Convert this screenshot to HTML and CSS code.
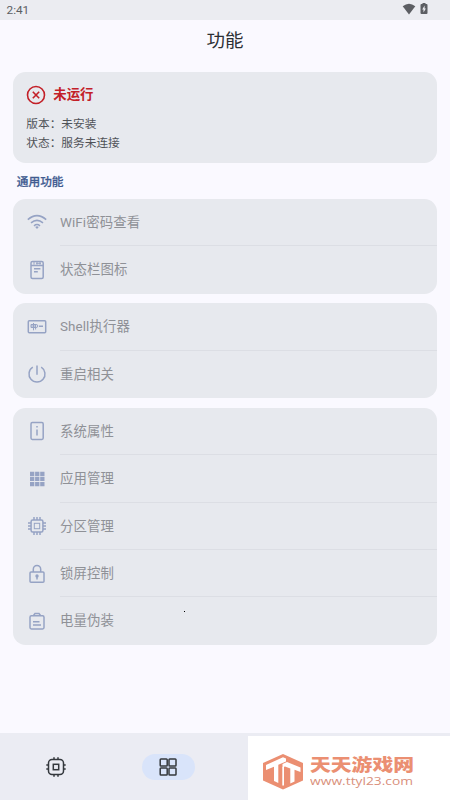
FILE: index.html
```html
<!DOCTYPE html>
<html lang="zh-CN">
<head>
<meta charset="utf-8">
<meta name="viewport" content="width=device-width, initial-scale=1">
<title>功能</title>
<link rel="stylesheet" href="styles.css">
</head>
<body>
<div class="screen">
  <header class="status-bar">
    <span>2:41</span>
    <div class="status-icons">
      <svg width="14" height="12" viewBox="0 0 14 12"><path fill="currentColor" d="M.7 3.3Q7-1.7 13.3 3.3L7 11.5Z"/></svg>
      <svg width="8" height="12" viewBox="0 0 8 12"><path fill="currentColor" d="M2.5 0h3v1h1q1 0 1 1v8q0 1-1 1h-5q-1 0-1-1V2q0-1 1-1h1Z"/><path fill="#ebecf1" d="M4.6 2.5 2.2 6.5h1.3v3l2.4-4.1H4.6Z"/></svg>
    </div>
  </header>
  <h1 class="page-title">功能</h1>
  <main class="content">
    <section class="card summary">
      <div class="summary-head">
        <svg class="icon" viewBox="0 0 20 20"><circle cx="10" cy="10" r="8.5"/><path d="m6.8 6.8 6.4 6.4m0-6.4-6.4 6.4"/></svg>
        <strong>未运行</strong>
      </div>
      <p>版本：未安装</p>
      <p>状态：服务未连接</p>
    </section>
    <h2 class="section-title">通用功能</h2>
    <section class="card">
      <div class="row">
        <svg class="icon" viewBox="0 0 20 20"><path d="M.8 6.6q9.2-8 18.4 0M4 9.9q6-5.1 12 0M7 12.8q3-2.5 6 0"/><path class="solid" d="m8.2 14 1.8 2 1.8-2q-1.8-1.4-3.6 0Z"/></svg>
        <span>WiFi密码查看</span>
      </div>
      <div class="row">
        <svg class="icon" viewBox="0 0 20 20"><rect x="4" y="1.6" width="12.2" height="16.8" rx="1.5"/><path d="M4 5.4h12.2M7 8.8h6.4M7 11.8h3.8"/><path class="thin" d="M7 2v2.7m3-2.7v2.7m3-2.7v2.7M9 3.3h5"/></svg>
        <span>状态栏图标</span>
      </div>
    </section>
    <section class="card">
      <div class="row">
        <svg class="icon" viewBox="0 0 20 20"><rect x="1.3" y="3.8" width="17.4" height="12" rx="1"/><path class="thin" d="M6.5 6v7.3M4 7.5h5.2q1.6 0 1.6 1.5t-1.6 1.5H4ZM4 9h5M8.6 7.5v5"/><path d="M12 9.3h4"/></svg>
        <span>Shell执行器</span>
      </div>
      <div class="row">
        <svg class="icon" viewBox="0 0 20 20"><path d="M10 1.5v9.2M5.8 3.2a8 8 0 1 0 8.4 0"/></svg>
        <span>重启相关</span>
      </div>
    </section>
    <section class="card">
      <div class="row">
        <svg class="icon" viewBox="0 0 20 20"><rect x="4" y="1.6" width="12.2" height="16.8" rx="1.3"/><path d="M10 5v1.5m0 2v6"/></svg>
        <span>系统属性</span>
      </div>
      <div class="row">
        <svg class="icon" viewBox="0 0 20 20"><path class="solid" d="M3 2.7h4.3V7H3Zm5.1 0h4.3V7H8.1Zm5.1 0h4.3V7h-4.3ZM3 7.8h4.3v4.3H3Zm5.1 0h4.3v4.3H8.1Zm5.1 0h4.3v4.3h-4.3ZM3 12.9h4.3v4.3H3Zm5.1 0h4.3v4.3H8.1Zm5.1 0h4.3v4.3h-4.3Z"/></svg>
        <span>应用管理</span>
      </div>
      <div class="row">
        <svg class="icon" viewBox="0 0 20 20"><rect x="4.1" y="4.1" width="11.8" height="11.8" rx="1.5"/><path d="M7 1v3m3-3v3m3-3v3M7 16v3m3-3v3m3-3v3M1 7h3m-3 3h3m-3 3h3M16 7h3m-3 3h3m-3 3h3"/><rect class="thin" x="7.3" y="7.3" width="5.4" height="5.4"/></svg>
        <span>分区管理</span>
      </div>
      <div class="row">
        <svg class="icon" viewBox="0 0 20 20"><rect x="3" y="8" width="14" height="10.2" rx="1"/><path d="M6.3 8V5.2a3.7 3.7 0 0 1 7.4 0V8M10 12v3.5"/><circle class="solid" cx="10" cy="12" r="1.7"/></svg>
        <span>锁屏控制</span>
      </div>
      <div class="row">
        <svg class="icon" viewBox="0 0 20 20"><rect x="3" y="4.8" width="14" height="13.1" rx="1.4"/><path d="M6.3 4.8 8 2.5h4l1.7 2.3M6 10.8h6.5M6 14.1h8"/></svg>
        <span>电量伪装</span>
      </div>
    </section>
  </main>
  <nav class="tab-bar">
    <div class="tab">
      <svg class="icon" viewBox="0 0 20 20"><rect x="2.5" y="2.5" width="15" height="15" rx="3.5"/><rect x="7.3" y="7.3" width="5.4" height="5.4"/><path d="M8 .3v2.2M12 .3v2.2M8 17.5v2.2M12 17.5v2.2M.3 8h2.2M.3 12h2.2M17.5 8h2.2M17.5 12h2.2"/></svg>
    </div>
    <div class="tab active">
      <svg class="icon" viewBox="0 0 20 20"><rect x="2.2" y="2" width="7" height="7" rx=".8"/><rect x="11" y="2" width="7" height="7" rx=".8"/><rect x="2.2" y="11" width="7" height="7" rx=".8"/><rect x="11" y="11" width="7" height="7" rx=".8"/></svg>
    </div>
  </nav>
  <i class="speck"></i>
  <aside class="watermark">
    <svg width="40" height="36" viewBox="0 0 40 36"><path fill="#eb8f72" d="M20 0 40 9v17.5L20 35.5 0 26.5V9Z"/><path fill="#fff" d="M3 11 20 3.2 23 4.6V7.5L15.3 10.8V29L11 27V12.7L3 16ZM19.5 10 24 8 37.5 13.5V18L31.5 15.8V27.5L27.3 29.4V14.4L22 12.5 19.5 13.5Z"/><path fill="#fff" d="M19.3 13h1.7v18.5h-1.7Z"/></svg>
    <div class="brand">
      <div class="brand-name">天天游戏网</div>
      <div class="brand-url">www.ttyl23.com</div>
    </div>
  </aside>
</div>
</body>
</html>
```
FILE: styles.css
```css
* { box-sizing: border-box; }

body {
  margin: 0;
  font-family: Roboto, "Noto Sans CJK SC", sans-serif;
  background: #faf9ff;
}

h1, h2, p { margin: 0; }

svg { display: block; flex: none; }

.screen {
  position: relative;
  display: flex;
  flex-direction: column;
  height: 800px;
  overflow: hidden;
}

.status-bar {
  display: flex;
  align-items: center;
  justify-content: space-between;
  height: 20px;
  padding: 0 22px 0 6.5px;
  background: #ebecf1;
  color: #5c5e63;
  font-size: 11.8px;
}

.status-icons {
  display: flex;
  gap: 4px;
  margin-top: -2px;
}

.page-title {
  height: 51.8px;
  line-height: 43px;
  text-align: center;
  font-size: 18.5px;
  font-weight: 400;
  color: #2d3035;
}

.content {
  flex: 1;
  padding: 0 13.3px;
}

.card {
  margin-bottom: 9.6px;
  border-radius: 12.5px;
  background: #e7e9ee;
  overflow: hidden;
}

.icon {
  width: 20px;
  height: 20px;
  fill: none;
  stroke: currentColor;
  stroke-width: 1.5;
}

.icon .solid { fill: currentColor; stroke: none; }
.icon .thin { stroke-width: 1; }

.summary {
  height: 91.5px;
  margin: 0;
  padding: 13px;
  color: #505358;
  font-size: 11.7px;
  line-height: 19px;
}

.summary-head {
  display: flex;
  align-items: center;
  gap: 7px;
  height: 20px;
  margin-bottom: 10px;
  color: #c32028;
  font-size: 13.4px;
}

.summary-head .icon { stroke-width: 1.6; }
.summary-head strong { font-weight: 700; line-height: 20px; padding-top: 1px; }

.section-title {
  height: 35.7px;
  padding-left: 3.5px;
  line-height: 39px;
  font-size: 11.7px;
  font-weight: 500;
  color: #405b90;
  -webkit-text-stroke: .25px #405b90;
}

.row {
  display: flex;
  align-items: center;
  height: 47.4px;
  padding-left: 13.4px;
  gap: 13.3px;
  color: #96a3c4;
}

.row span {
  flex: 1;
  height: 100%;
  line-height: 48.4px;
  font-size: 13.4px;
  letter-spacing: .1px;
  color: #8f9197;
}

.row + .row span { box-shadow: 0 -1px #dcdee4; }

.tab-bar {
  display: flex;
  height: 67px;
  padding-top: 20.5px;
  background: #ebecf3;
}

.tab {
  display: flex;
  align-items: center;
  justify-content: center;
  width: 53px;
  height: 26px;
  margin-left: 29px;
  border-radius: 13px;
  color: #34383d;
}

.tab + .tab { margin-left: 59.5px; }
.tab.active { background: #d9e4fa; }

.speck {
  position: absolute;
  left: 184px;
  top: 611px;
  width: 1px;
  height: 1px;
  background: #000;
}

.watermark {
  position: absolute;
  right: 0;
  bottom: 0;
  display: flex;
  gap: 7px;
  width: 202px;
  height: 64px;
  padding: 18px 0 0 15px;
  background: #fff;
}

.brand {
  width: 104px;
  white-space: nowrap;
}

.brand-name {
  width: 85px;
  height: 20px;
  line-height: 20px;
  color: #eb8f72;
  font-family: "Noto Sans CJK SC", sans-serif;
  font-size: 17px;
  font-weight: 900;
  transform: scaleX(1.224);
  transform-origin: left;
}

.brand-url {
  width: 88px;
  height: 13px;
  line-height: 13px;
  color: #d98f7b;
  font-family: "Open Sans", sans-serif;
  font-size: 11.5px;
  transform: scaleX(1.2);
  transform-origin: left;
}
```
